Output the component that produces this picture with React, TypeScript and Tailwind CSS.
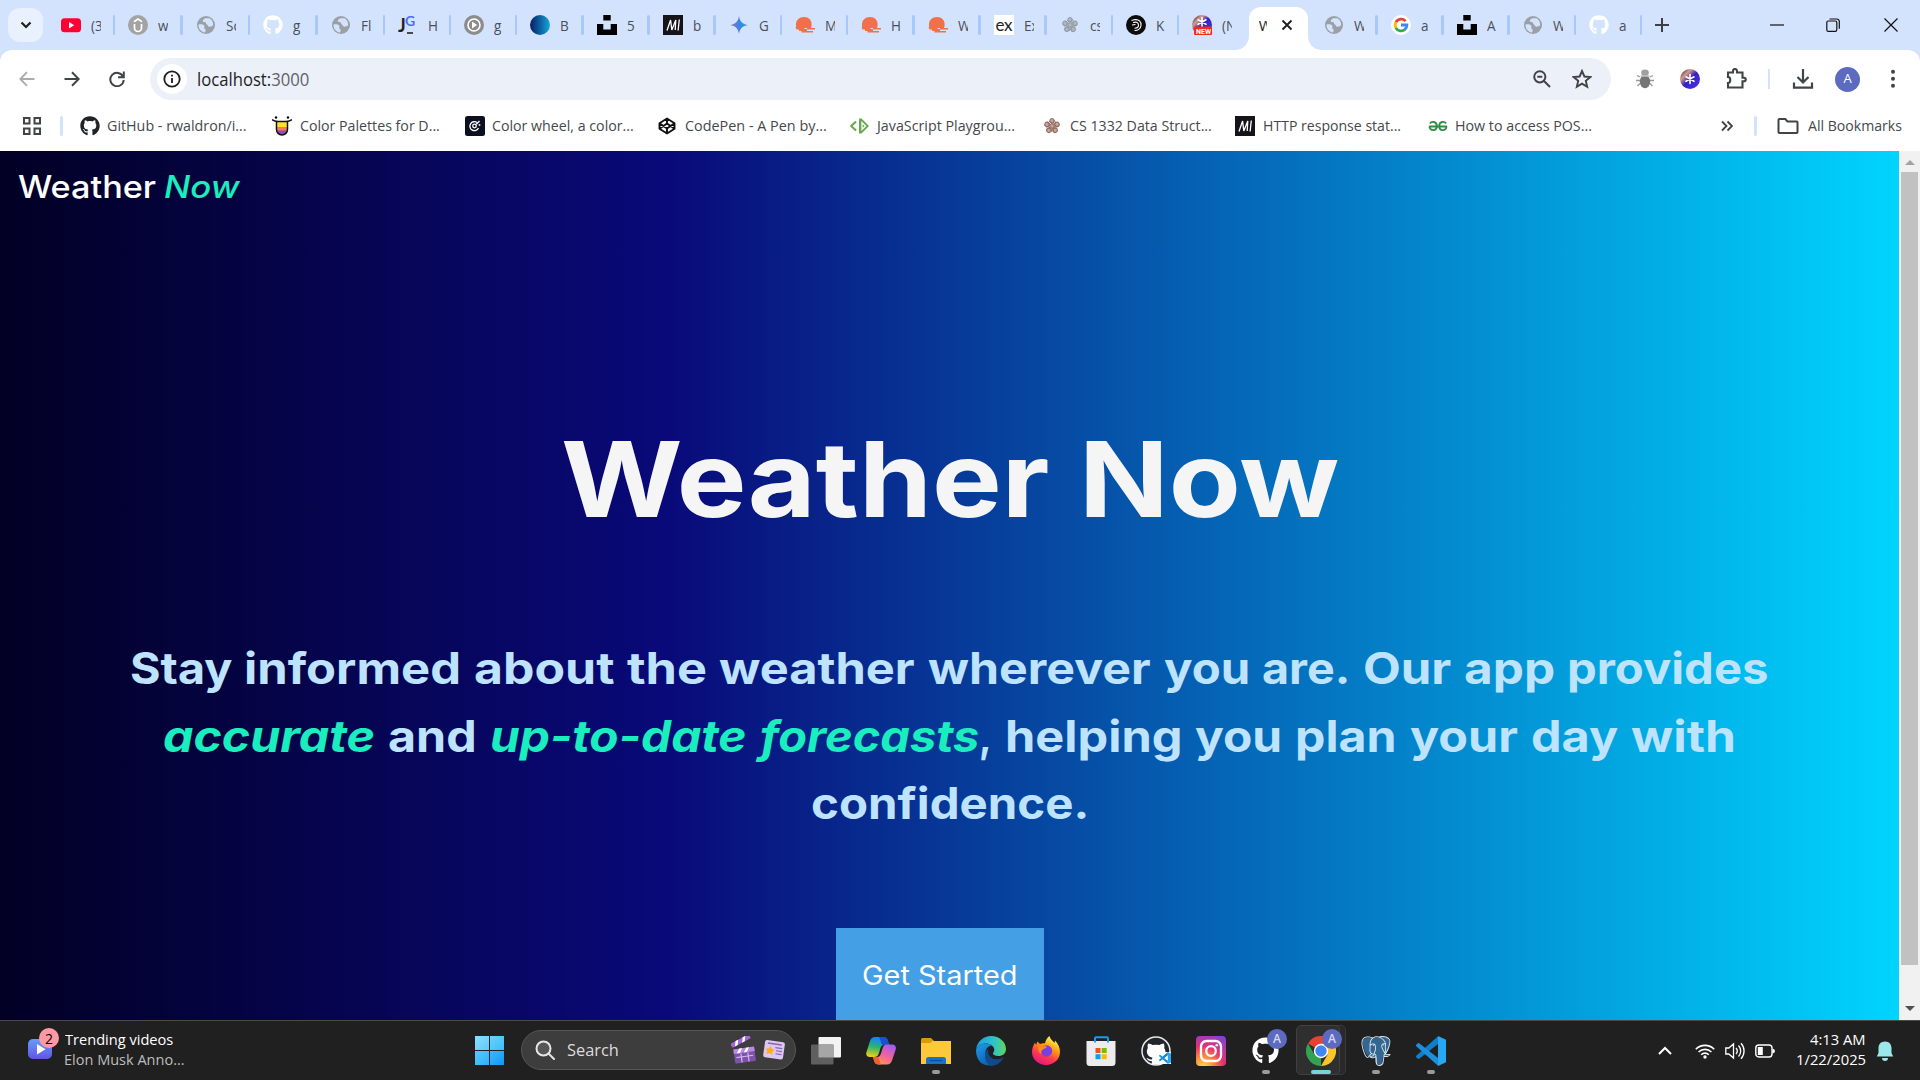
import { useLayoutEffect, useRef, useState, type ReactNode } from "react";
import { FaGithub } from "react-icons/fa";
import { SiPostgresql } from "react-icons/si";

/* Text stretched horizontally to an exact width. */
function Fit({ w, className = "", children }: { w: number; className?: string; children: ReactNode }) {
  const ref = useRef<HTMLSpanElement>(null);
  const [scale, setScale] = useState(1);
  useLayoutEffect(() => {
    if (ref.current) setScale(w / ref.current.offsetWidth);
  }, [w]);
  return (
    <span className={`block shrink-0 text-left whitespace-nowrap ${className}`} style={{ width: w }}>
      <span ref={ref} className="inline-block origin-left" style={{ transform: `scaleX(${scale})` }}>
        {children}
      </span>
    </span>
  );
}

/* ---------- favicons ---------- */
const Globe = () => (
  <svg viewBox="0 0 20 20" className="size-5">
    <circle cx="10" cy="10" r="9" fill="#9aa0a6" />
    <path d="M2.500 9.500c2-.3 4.800-.3 5.800 1.200.6 1-.3 1.500 0 2.500.2.800 1.600 1 1.500 2.300-.1.800-.7 1.400-1 2C5 17 2.300 13.500 2.500 9.500Z" fill="#d3e3fd" />
    <path d="M9 3.200c-1 1-2.200 1.500-2.300 2.700 0 .9 1.300 1 2.300 1.100 1 .2.700 1.800 1.800 2.400 1.200.6 1.200 2 2.400 2.300 1.500.3 2.500-.7 3.800-1.200.6-3-1-6-3.700-7.200Z" fill="#d3e3fd" />
  </svg>
);
const YouTube = () => (
  <svg viewBox="0 0 20 20" className="size-5">
    <rect y="3.200" width="20" height="14" rx="3.500" fill="#ff0033" />
    <path d="M8 7v6.400l5.200-3.200Z" fill="#fff" />
  </svg>
);
const UpArrow = () => (
  <svg viewBox="0 0 20 20" className="size-5" fill="none">
    <circle cx="10" cy="10" r="10" fill="#a3a3a3" />
    <path d="M6.500 9v4a3.500 3.500 0 0 0 7 0V9M6 6.800 10 4l4 2.800" stroke="#fff" strokeWidth="1.700" />
  </svg>
);
const JG = () => (
  <svg viewBox="0 0 20 20" className="size-5">
    <text x="0" y="17" fontSize="18" fontWeight="700" fontFamily="Lato, sans-serif" fill="#222" textLength="7">J</text>
    <text x="7" y="11" fontSize="14" fontWeight="700" fontFamily="Lato, sans-serif" fill="#4f6df5">G</text>
    <path d="M9 18h6" stroke="#222" strokeWidth="1.600" />
  </svg>
);
const PlayRing = () => (
  <svg viewBox="0 0 20 20" className="size-5">
    <circle cx="10" cy="10" r="10" fill="#8c8c8c" />
    <circle cx="10" cy="10" r="6" fill="none" stroke="#fff" strokeWidth="1.600" />
    <path d="M8 6.500v7l5.200-3.500Z" fill="#fff" />
  </svg>
);
const BlueBall = () => <span className="block size-5 rounded-full bg-linear-to-r from-[#0b1c66] to-[#18a8dc]" />;
const Unsplash = () => (
  <svg viewBox="0 0 20 20" className="size-5">
    <path d="M6.300 0h7.400v5.500H6.300ZM0 9h6.300v5.600h7.400V9H20v11H0Z" />
  </svg>
);
const Mdn = () => (
  <svg viewBox="0 0 20 20" className="size-5" fill="none">
    <path d="M0 0h20v20H0Z" fill="#15141a" />
    <path d="M4 15.500 7.600 5l1.200 10L12.800 5l-.6 10M16.300 4.500l-1.200 11" stroke="#fff" strokeWidth="1.300" />
  </svg>
);
const Gemini = () => (
  <svg viewBox="0 0 20 20" className="size-5">
    <defs>
      <linearGradient id="gem"><stop offset="0.1" stopColor="#8a73bd" /><stop offset="0.5" stopColor="#3d84e6" /><stop offset="1" stopColor="#1ba1e3" /></linearGradient>
    </defs>
    <path d="M10 1c.8 5.500 3.500 8.300 9 9-5.500.8-8.200 3.500-9 9-.8-5.500-3.500-8.200-9-9 5.500-.7 8.200-3.500 9-9Z" fill="url(#gem)" />
  </svg>
);
const Jelly = () => (
  <svg viewBox="0 0 20 20" className="size-5" fill="#f0704a">
    <path d="M1.500 13C-.5 7 3 2 9 2s9 5 7 11Z" />
    <path d="M.5 12h9v2.500h-8ZM12 13h8v1.600h-8ZM4 14h8v3.500H6.500V16H4Z" /><path d="M12 16h6v1.500h-6Z" />
  </svg>
);
const Ex = () => (
  <span className="flex size-5 items-center justify-center bg-white font-['Lato',sans-serif] text-[17px] leading-5 tracking-[-0.5px] text-[#222]">ex</span>
);
const Flower = ({ c = "#929aa5", d = "#b2b7be" }: { c?: string; d?: string }) => (
  <svg viewBox="0 0 20 20" className="size-5" fill="none" stroke={c} strokeWidth="1">
    {[0, 72, 144, 216, 288].map((a) => (
      <g key={a} transform={`rotate(${a} 10 10)`}>
        <circle cx="10" cy="4.700" r="2.200" fill={d} />
        <path d="m10 10 2.500-6M10 8 7 5" />
      </g>
    ))}
    <circle cx="10" cy="10" r="2.200" fill={d} />
  </svg>
);
const DarkSwirl = () => (
  <svg viewBox="0 0 20 20" className="size-5" fill="none" stroke="#fff" strokeWidth="1.100">
    <circle cx="10" cy="10" r="10" fill="#0c0c0c" stroke="none" />
    <path d="M5.500 5.500 8 4.800c5-1 7.500 2.200 7 5.700-.5 3.500-3 5-6.500 5M7 7.500c3.500-1 5.500 0 5.500 2.700 0 2-1.500 3-4 3M6 10l3.500-.5" />
  </svg>
);
const Asterisk = ({ badge = false }: { badge?: boolean }) => (
  <svg viewBox="0 0 20 20" className="size-5">
    <defs>
      <linearGradient id="ast" x1="0" y1="0" x2="1" y2="1"><stop offset="0" stopColor="#15102e" /><stop offset="0.28" stopColor="#d59c86" /><stop offset="0.5" stopColor="#3323c0" /><stop offset="1" stopColor="#4a34f5" /></linearGradient>
    </defs>
    <circle cx="10" cy="10" r="10" fill="url(#ast)" />
    <g transform={badge ? "translate(0 -3)" : ""} stroke="#fff" strokeWidth="1.600" strokeLinecap="round">
      <path d="M10 5.500v9M6 7.800l8 4.500M14 7.800l-8 4.500" />
    </g>
    {badge && <rect x="2" y="11.500" width="18" height="8.500" rx="1" fill="#f02d14" />}
    {badge && <text x="4" y="18.500" fontSize="7" fontWeight="700" fontFamily="Roboto, sans-serif" fill="#fff">NEW</text>}
  </svg>
);
const Google = () => (
  <svg viewBox="0 0 20 20" className="size-5" fill="none" strokeWidth="2.800">
    <circle cx="10" cy="10" r="10" fill="#fff" />
    <path d="M14.500 6.100A6 6 0 0 0 4.900 7.200" stroke="#ea4335" />
    <path d="M4.900 7.100a6 6 0 0 0 0 5.800" stroke="#fbbc05" />
    <path d="M4.800 12.800a6 6 0 0 0 9.200 1.700" stroke="#34a853" />
    <path d="M13.700 14.700c1.600-1.200 2.200-2.700 2.200-4.700H10" stroke="#4285f4" />
  </svg>
);
const GhWhite = () => <FaGithub className="size-5 text-white" />;

type Tab = { icon: ReactNode; t: string };
const tabsWide: Tab[] = [
  { icon: <YouTube />, t: "(3" },
  { icon: <UpArrow />, t: "w" },
  { icon: <Globe />, t: "So" },
  { icon: <GhWhite />, t: "g" },
  { icon: <Globe />, t: "Fl" },
];
const tabsMid: Tab[] = [
  { icon: <JG />, t: "H" },
  { icon: <PlayRing />, t: "g" },
  { icon: <BlueBall />, t: "B" },
  { icon: <Unsplash />, t: "5" },
  { icon: <Mdn />, t: "b" },
  { icon: <Gemini />, t: "G" },
  { icon: <Jelly />, t: "M" },
  { icon: <Jelly />, t: "H" },
  { icon: <Jelly />, t: "W" },
  { icon: <Ex />, t: "Ex" },
  { icon: <Flower />, t: "cs" },
  { icon: <DarkSwirl />, t: "K" },
];
const tabsRight: Tab[] = [
  { icon: <Globe />, t: "W" },
  { icon: <Google />, t: "a" },
  { icon: <Unsplash />, t: "A" },
  { icon: <Globe />, t: "W" },
  { icon: <GhWhite />, t: "a" },
];

const TabItem = ({ icon, t, size = "w-[66.2px]", sep = true }: Tab & { size?: string; sep?: boolean }) => (
  <div className={`flex h-[50px] shrink-0 items-center pl-[13px] ${size}`}>
    {icon}
    <span className="ml-[10px] w-[10px] overflow-hidden text-[15px] leading-5 whitespace-nowrap text-[#4a4f57]">
      <span className="inline-block origin-left scale-x-90">{t}</span>
    </span>
    {sep && <span className="ml-auto h-5 w-[2.5px] rounded-full bg-[#a8c7fa]" />}
  </div>
);

const TabStrip = () => (
  <div className="flex h-[50px] shrink-0 bg-[#d3e3fd]">
    <div className="mt-2 ml-2 flex h-[34px] w-[35px] shrink-0 items-center justify-center rounded-xl bg-[#e9f1fe]">
      <svg viewBox="0 0 12 12" className="size-3" fill="none" stroke="#1f1f1f" strokeWidth="2.200"><path d="m1.500 3.500 4.500 4.500 4.500-4.500" /></svg>
    </div>
    <div className="ml-[4.5px] flex shrink-0">
      {tabsWide.map((t, i) => <TabItem key={i} {...t} size="w-[67.5px]" />)}
      {tabsMid.map((t, i) => <TabItem key={i} {...t} />)}
      <TabItem icon={<Asterisk badge />} t="(N" size="w-[69.6px]" sep={false} />
    </div>
    <div className="relative mt-[7px] flex h-[43px] w-[59px] shrink-0 items-center rounded-t-xl bg-white pb-[7px] pl-2.5">
      <svg viewBox="0 0 14 14" className="absolute bottom-0 -left-[14px] size-[14px]"><path d="M14 0v14H0C8 14 14 8 14 0Z" fill="#fff" /></svg>
      <svg viewBox="0 0 14 14" className="absolute -right-[14px] bottom-0 size-[14px]"><path d="M0 0v14h14C6 14 0 8 0 0Z" fill="#fff" /></svg>
      <span className="w-2 overflow-hidden text-[15px] whitespace-nowrap text-[#1f1f1f]">W</span>
      <svg viewBox="0 0 12 12" className="ml-[14px] size-3" stroke="#1f1f1f" strokeWidth="1.900"><path d="m1.500 1.500 9 9m0-9-9 9" /></svg>
    </div>
    <div className="ml-[3.5px] flex shrink-0">
      {tabsRight.map((t, i) => <TabItem key={i} {...t} />)}
    </div>
    <svg viewBox="0 0 14 14" className="mt-[18px] ml-[13px] size-[14px] shrink-0" stroke="#3c4043" strokeWidth="2"><path d="M7 0v14M0 7h14" /></svg>
    <div className="ml-auto flex items-center pr-[22px] pb-px">
      <svg viewBox="0 0 14 14" className="mr-[42px] size-[14px]" stroke="#111" strokeWidth="1.200"><path d="M0 7h14" /></svg>
      <svg viewBox="0 0 14 14" className="mr-[44px] size-[14px]" fill="none" stroke="#111" strokeWidth="1.200"><rect x=".8" y="3" width="10" height="10.400" rx="1.600" /><path d="M3.500 1h7.200a2.500 2.500 0 0 1 2.600 2.500v7.200" /></svg>
      <svg viewBox="0 0 14 14" className="size-[14px]" stroke="#111" strokeWidth="1.200"><path d="m.5.500 13 13m0-13-13 13" /></svg>
    </div>
  </div>
);

const Toolbar = () => (
  <div className="bg-[#d3e3fd]">
    <div className="flex h-[58px] items-center rounded-t-xl bg-white">
      <svg viewBox="0 0 16 16" className="ml-[19px] size-4 shrink-0" fill="none" stroke="#a9abad" strokeWidth="1.800"><path d="M15.500 8H1.500M8 1.200 1.300 8 8 14.800" /></svg>
      <svg viewBox="0 0 16 16" className="ml-[29px] size-4 shrink-0" fill="none" stroke="#414346" strokeWidth="2"><path d="M.5 8h14M8 1.200 14.700 8 8 14.800" /></svg>
      <svg viewBox="0 0 16 16" className="ml-[29px] size-4 shrink-0" fill="none" stroke="#414346" strokeWidth="2"><path d="M14 5.500A6.700 6.700 0 1 0 14.700 9M14.800.5v5.700H9" /></svg>
      <div className="ml-[25px] flex h-[42px] w-[1461px] shrink-0 items-center rounded-full bg-[#ecf0f9] pl-[7px]">
        <span className="flex size-[30px] items-center justify-center rounded-full bg-white">
          <svg viewBox="0 0 18 18" className="size-[18px]" fill="none" stroke="#1f1f1f" strokeWidth="1.800"><circle cx="9" cy="9" r="7.700" /><path d="M9 8v5M9 4.700v1.800" /></svg>
        </span>
        <Fit w={112} className="ml-2.5 text-[18px] leading-6 text-[#1f1f1f]">localhost:<span className="text-[#5f6368]">3000</span></Fit>
        <svg viewBox="0 0 18 18" className="ml-auto size-[18px]" fill="none" stroke="#414346" strokeWidth="2"><circle cx="6.800" cy="6.800" r="5.600" /><path d="m11 11 6 6M4.300 6.800h5" /></svg>
        <svg viewBox="0 0 20 20" className="mr-[19px] ml-[21px] size-5" fill="none" stroke="#414346" strokeWidth="1.900"><path d="m10 2 2.400 5.500 6 .5-4.600 3.900 1.400 5.900L10 14.700l-5.200 3.100 1.400-5.900L1.600 8l6-.5Z" /></svg>
      </div>
      <svg viewBox="0 0 20 20" className="ml-6 size-5 shrink-0">
        <path d="M2 6.500 5 8m13-1.500L15 8M1 11.500h18M2.500 17 5 14.500m12.500 2.500L15 14.500" stroke="#999" strokeWidth="1.300" />
        <ellipse cx="10" cy="12.700" rx="5.200" ry="6.500" fill="#757575" /><ellipse cx="10" cy="3.700" rx="3.800" ry="3.200" fill="#a0a0a0" /><path d="M5.500 7h9" stroke="#c2c2c2" strokeWidth="1.500" />
      </svg>
      <span className="ml-[25px] shrink-0"><Asterisk /></span>
      <svg viewBox="0 0 22 22" className="ml-[25px] size-[22px] shrink-0" fill="none" stroke="#414346" strokeWidth="2.100"><path d="M3 4.500h5V3a2 2 0 0 1 4 0v1.500h5.500v5.300H19a1.500 1.500 0 0 1 0 3.500h-1.500v6.200H3V15c3 0 3-6 0-6Z" /></svg>
      <span className="ml-[21px] h-5 w-0.5 shrink-0 bg-[#d3e3fd]" />
      <svg viewBox="0 0 22 22" className="ml-[22px] size-[22px] shrink-0" fill="none" stroke="#414346" strokeWidth="2.200"><path d="M11 1v13M5.500 9l5.500 5.500L16.500 9M2 14.500v5.200h18v-5.200" /></svg>
      <span className="ml-[21px] flex size-[25px] shrink-0 items-center justify-center rounded-full bg-[#5c6bc0] text-[13px] text-white">A</span>
      <svg viewBox="0 0 6 20" className="ml-[30px] h-5 w-1.5 shrink-0" fill="#414346"><circle cx="3" cy="2.700" r="2" /><circle cx="3" cy="9.700" r="2" /><circle cx="3" cy="16.700" r="2" /></svg>
    </div>
  </div>
);

const bookmarks: { icon: ReactNode; t: string; w: number }[] = [
  { icon: <FaGithub className="size-5 text-[#1f2328]" />, t: "GitHub - rwaldron/i...", w: 140 },
  {
    icon: (
      <svg viewBox="0 0 20 20" className="size-5">
        <path d="M4.500 5h11v8.500a5.500 5.500 0 0 1-11 0Z" fill="#ffe02e" /><path d="M4.500 11h11v4h-11Z" fill="#f77b5a" /><path d="M5 14.500h10c0 3-2 4.500-5 4.500s-5-2-5-4.500" fill="#8b4fb5" />
        <path d="M0 3.500c2 1.800 4 2 6 2h8c2 0 4-.2 6-2M4.500 5.500v8a5.500 5.500 0 0 0 11 0v-8" fill="none" stroke="#111" strokeWidth="1.500" /><circle cx="4" cy="1.500" r="1.200" /><circle cx="16" cy="1.500" r="1.200" />
      </svg>
    ),
    t: "Color Palettes for D...", w: 140,
  },
  {
    icon: (
      <svg viewBox="0 0 20 20" className="size-5" fill="none" stroke="#fff" strokeWidth="1.300">
        <rect width="20" height="20" rx="2.500" fill="#0b1020" stroke="none" /><path d="M12 6.500A4.500 4.500 0 1 0 13.500 12" /><circle cx="9.500" cy="10" r="1.800" /><path d="M11.300 8.300 14.500 5" /><circle cx="14.500" cy="9" r=".3" />
      </svg>
    ),
    t: "Color wheel, a color...", w: 142,
  },
  {
    icon: (
      <svg viewBox="0 0 20 20" className="size-5" fill="none" stroke="#111" strokeWidth="1.900" strokeLinejoin="round">
        <path d="m10 2.500 7.500 4.700v5.600L10 17.500l-7.500-4.700V7.200ZM10 2.500v5m0 5v5M2.500 7.200 10 12.500l7.500-5.300M2.500 12.800 10 7.500l7.500 5.300" />
      </svg>
    ),
    t: "CodePen - A Pen by...", w: 142,
  },
  {
    icon: (
      <svg viewBox="0 0 20 20" className="size-5" fill="none" stroke="#6aa84f" strokeWidth="2">
        <path d="M6 5.500 1.300 10 6 14.500" /><path d="M9 2.500v15h2.500L19 10l-7.500-7.500Z" fill="#6aa84f" stroke="none" /><path d="M12 6.500v7l3.500-3.500Z" stroke="#fff" strokeWidth="1.300" />
      </svg>
    ),
    t: "JavaScript Playgrou...", w: 138,
  },
  { icon: <Flower c="#8c6b62" d="#c9a497" />, t: "CS 1332 Data Struct...", w: 142 },
  { icon: <Mdn />, t: "HTTP response stat...", w: 138 },
  {
    icon: (
      <svg viewBox="0 0 20 20" className="size-5" fill="none" stroke="#2f8d46" strokeWidth="1.900">
        <path d="M1 10.500h18M2 7.500c1.500-2.500 6.800-2.500 6.800 2.800 0 5-6.800 5-7.300.2M18 7.500c-1.500-2.500-6.800-2.500-6.800 2.800 0 5 6.800 5 7.300.2" />
      </svg>
    ),
    t: "How to access POS...", w: 137,
  },
];

const BookmarkBar = () => (
  <div className="flex h-[43px] items-center bg-white pb-[7px] text-[15px] leading-5 text-[#45484c]">
    <svg viewBox="0 0 18 18" className="ml-[23px] size-[18px] shrink-0" fill="none" stroke="#414346" strokeWidth="2"><path d="M1 1h5.500v5.500H1ZM11.500 1H17v5.500h-5.500ZM1 11.500h5.500V17H1ZM11.500 11.500H17V17h-5.500Z" /></svg>
    <span className="ml-[19px] h-5 w-[2.5px] shrink-0 rounded-full bg-[#d3e3fd]" />
    <div className="ml-[17px] flex">
      {bookmarks.map((b) => (
        <div key={b.t} className="flex w-[192.6px] shrink-0 items-center gap-[7.5px]">
          {b.icon}
          <Fit w={b.w} className="pb-0.5">{b.t}</Fit>
        </div>
      ))}
    </div>
    <svg viewBox="0 0 12 12" className="ml-[101px] size-3 shrink-0" fill="none" stroke="#414346" strokeWidth="1.800"><path d="m1 1.500 4.500 4.500L1 10.500M6.500 1.500 11 6l-4.500 4.500" /></svg>
    <span className="ml-[21px] h-5 w-[2.5px] shrink-0 rounded-full bg-[#d3e3fd]" />
    <svg viewBox="0 0 22 18" className="ml-5 h-[18px] w-[22px] shrink-0" fill="none" stroke="#414346" strokeWidth="2"><path d="M2.500 2h5.800l2.200 2.400h9a1 1 0 0 1 1 1V15a1 1 0 0 1-1 1h-17a1 1 0 0 1-1-1V3a1 1 0 0 1 1-1Z" /></svg>
    <Fit w={94} className="ml-[9px] pb-0.5">All Bookmarks</Fit>
  </div>
);

const Em = ({ w, children }: { w: number; children: string }) => <Fit w={w} className="text-[#1aeebf] italic">{children}</Fit>;

const WeatherPage = () => (
  <div className="flex h-[869px] shrink-0 overflow-hidden">
    <main className="flex w-[1899px] shrink-0 flex-col items-center overflow-hidden bg-[linear-gradient(90deg,rgb(2,0,36)_0%,rgb(9,9,121)_35%,rgb(0,212,255)_100%)] font-['Inter','Liberation_Sans',sans-serif]">
      <header className="flex h-[72px] items-center self-start pt-4 pl-[18px] text-[31.5px] leading-10 font-medium text-white">
        <Fit w={138}>Weather</Fit>
        <Fit w={75} className="ml-[8px] text-[#1aeebf] italic">Now</Fit>
      </header>
      <h1 className="mt-[207px] flex h-[130px] items-center text-[104.5px] leading-[130px] font-bold text-[#f5f5f5]">
        <Fit w={489}>Weather</Fit>
        <Fit w={260} className="ml-[29px]">Now</Fit>
      </h1>
      <div className="mt-[91px] flex flex-col items-center text-[43.5px] leading-[67.5px] font-bold text-[#bee3ff]">
        <div className="flex w-[1640px] justify-between">
          <Fit w={102}>Stay</Fit><Fit w={217}>informed</Fit><Fit w={140}>about</Fit><Fit w={80}>the</Fit><Fit w={196}>weather</Fit>
          <Fit w={223}>wherever</Fit><Fit w={86}>you</Fit><Fit w={88}>are.</Fit><Fit w={88}>Our</Fit><Fit w={91}>app</Fit><Fit w={202}>provides</Fit>
        </div>
        <div className="flex w-[1573px] justify-between">
          <Em w={212}>accurate</Em><Fit w={89}>and</Fit><Em w={257}>up-to-date</Em>
          <span className="flex"><Em w={219}>forecasts</Em><Fit w={13}>,</Fit></span>
          <Fit w={178}>helping</Fit><Fit w={87}>you</Fit><Fit w={102}>plan</Fit><Fit w={108}>your</Fit><Fit w={87}>day</Fit><Fit w={105}>with</Fit>
        </div>
        <Fit w={278}>confidence.</Fit>
      </div>
      <button className="mt-[90px] mr-[19px] flex h-[110px] w-[208px] shrink-0 justify-center bg-[#449fe4] pt-[27px] text-[26.5px] leading-10 font-normal text-white">
        <Fit w={156}>Get Started</Fit>
      </button>
    </main>
    <div className="flex w-[21px] flex-col items-center bg-[#f1f1f1]">
      <svg viewBox="0 0 10 5" className="mt-[9px] h-[5px] w-2.5 shrink-0" fill="#a3a3a3"><path d="M5 0l5 5H0Z" /></svg>
      <div className="mt-[7px] h-[793px] w-[17px] shrink-0 bg-[#c1c1c1]" />
      <svg viewBox="0 0 10 5" className="mt-[41px] h-[5px] w-2.5 shrink-0" fill="#505050"><path d="M0 0h10L5 5Z" /></svg>
    </div>
  </div>
);

/* ---------- taskbar ---------- */
const App55 = ({ children, run }: { children: ReactNode; run?: "idle" | "active" }) => (
  <div className="relative flex h-[59px] w-[55px] shrink-0 items-center justify-center">
    {children}
    {run === "idle" && <span className="absolute bottom-[6px] h-1 w-2 rounded-full bg-[#9a9a9a]" />}
    {run === "active" && <span className="absolute bottom-[6px] h-1 w-5 rounded-full bg-[#76d5da]" />}
  </div>
);
const ABadge = () => (
  <span className="absolute top-[8px] left-[29px] flex size-5 items-center justify-center rounded-full bg-[#5c6bc0] text-[12px] font-semibold text-[#d5d9f2]">A</span>
);
const VsCode = ({ className }: { className: string }) => (
  <svg viewBox="0 0 30 30" className={className}>
    <path d="M22 0 30 3.800v22.400L22 30Z" fill="#28a8f2" />
    <path d="M22 .2V8L3.500 22.500a1.600 1.600 0 0 1-2 0L.5 21.500a1.400 1.400 0 0 1 0-2Z" fill="#0f7fcc" />
    <path d="M22 29.800V22L3.500 7.500a1.600 1.600 0 0 0-2 0L.5 8.500a1.400 1.400 0 0 0 0 2Z" fill="#1c8fdc" />
  </svg>
);

const Taskbar = () => (
  <footer className="flex h-[60px] shrink-0 border-t border-[#4a4848] bg-[#212020] font-['Open_Sans','Noto_Sans',sans-serif]">
    <div className="flex w-[460px] items-center pb-[3px] pl-7">
      <div className="relative h-5 w-6 rounded-[5px] bg-linear-to-b from-[#669bf8] to-[#6253e8]">
        <svg viewBox="0 0 24 20" className="h-5 w-6"><path d="M9 5v10.500l8.500-5.200Z" fill="#fff" /></svg>
        <span className="absolute -top-[11px] left-[11px] flex size-5 items-center justify-center rounded-full bg-[#ff99a4] text-[14px] text-black">2</span>
      </div>
      <div className="ml-[12px] text-[15px] leading-5 text-white">
        <Fit w={108} className="ml-px">Trending videos</Fit>
        <Fit w={121} className="text-[#bdbdbd]">Elon Musk Anno...</Fit>
      </div>
    </div>
    <div className="flex w-[61px] items-center pl-[15px]">
      <div className="grid size-[29px] grid-cols-2 gap-px">
        <span className="bg-linear-to-br from-[#8ae0fd] to-[#5cc9fb]" /><span className="bg-linear-to-br from-[#6ad2fb] to-[#3dbbfa]" />
        <span className="bg-linear-to-br from-[#55cbfb] to-[#2cb0f9]" /><span className="bg-linear-to-br from-[#3cbafb] to-[#0d96f6]" />
      </div>
    </div>
    <div className="mt-[9px] flex h-10 w-[275px] shrink-0 items-center rounded-full border border-[#565656] bg-[#3d3d3d] pl-[13px]">
      <svg viewBox="0 0 20 20" className="size-5" fill="none" stroke="#e6e6e6" strokeWidth="2"><circle cx="8.500" cy="8.500" r="7" fill="#565656" /><path d="m13.500 13.500 5.500 5.500" strokeLinecap="round" /></svg>
      <Fit w={52} className="ml-3 text-[17px] leading-6 text-[#dcdcdc]">Search</Fit>
      <svg viewBox="0 0 26 28" className="ml-[112px] h-7 w-[26px]">
        <g transform="rotate(-8 13 18)"><rect x="3" y="12" width="21" height="14.500" rx="1.500" fill="#7e52a8" /><path d="M3 12h21v4.500H3Z" fill="#b98be0" /><path d="m6 16.500 3-4.500h3l-3 4.500Zm7 0 3-4.500h3l-3 4.500Z" fill="#fff" /><path d="M5 20.500h17M10 17v9m7-9v9" stroke="#d3b2f0" strokeWidth="1.200" /></g>
        <g transform="rotate(-28 2 11)"><rect x="1" y="7" width="21" height="4.500" rx="1" fill="#a867d8" /><path d="m4 11.500 3-4.500h3l-3 4.500Zm8 0L15 7h3l-3 4.500Z" fill="#fff" /></g>
      </svg>
      <svg viewBox="0 0 24 22" className="ml-[5px] h-[22px] w-6">
        <g transform="rotate(8 12 11)"><rect x="2" y="2" width="20" height="17.500" rx="2" fill="#dcc8f0" /><path d="M5 5h14" stroke="#8a63b5" strokeWidth="1.500" /><path d="M13 8.500h7M14 11.500h6M14 14.500h6" stroke="#8a63b5" strokeWidth="1.200" /><path d="m8 7.500 1.600 2.700 3 .5-2.100 2.200.4 3L8 14.700l-2.900 1.200.4-3-2-2.200 3-.5Z" fill="#ffab1a" /></g>
      </svg>
    </div>
    <div className="ml-[2px] flex">
      <App55>
        <svg viewBox="0 0 30 28" className="h-7 w-[30px]"><rect x="7.500" y="0" width="22.500" height="20.500" rx="1" fill="#f3f3f3" /><rect x="0" y="7.500" width="22.500" height="20" rx="1" fill="#5f5f5f" /><path d="M7.500 7.500h15v13h-15Z" fill="#a6a6a6" /></svg>
      </App55>
      <App55>
        <svg viewBox="0 0 30 28" className="h-7 w-[30px]">
          <defs>
            <linearGradient id="cp1" x1="0.500" y1="0" x2="0.300" y2="1"><stop offset="0.100" stopColor="#1787f0" /><stop offset="0.500" stopColor="#2bb56d" /><stop offset="1" stopColor="#f3cf16" /></linearGradient>
            <linearGradient id="cp2" x1="0.700" y1="0" x2="0.200" y2="1"><stop offset="0" stopColor="#a35bf0" /><stop offset="0.500" stopColor="#f0639e" /><stop offset="1" stopColor="#ff9a4a" /></linearGradient>
          </defs>
          <path d="M9 0h8c3 0 4 1 5 4l1 4h-5c-2 0-3 1-3.500 3L13 16c-1 3-2.500 4-5 4H4c-3 0-4.500-2-3.500-5L4 4C5 1.200 6.500 0 9 0Z" fill="url(#cp1)" />
          <path d="M13 0h4c3 0 4 1 5 4l1 4h-5c-1.500 0-2.300-.5-2.800-2L14 2Z" fill="#1b4fd0" />
          <path d="M21 27.500h-8c-3 0-4-1-5-4L7 20h4c2 0 3.200-1 4-3.500l1.500-5c.8-2.500 2-4 4.500-4h5c3 0 4.500 2 3.700 5L26 23.500c-1 2.800-2.500 4-5 4Z" fill="url(#cp2)" />
          <path d="M7 20h5l3 7.500h-2c-3 0-4-1-5-4Z" fill="#f0612e" />
        </svg>
      </App55>
      <App55 run="idle">
        <svg viewBox="0 0 30 26" className="h-[26px] w-[30px]"><path d="M0 1.500Q0 0 1.500 0H10l3.500 3.500V9H0Z" fill="#dd9a07" /><path d="M0 5h9l3-2h18v23H0Z" fill="#fdc93a" /><path d="M5 26v-4.500q0-2.500 2.500-2.500h15q2.500 0 2.500 2.500V26Z" fill="#1574c9" /><path d="M9 22.500h12" stroke="#0b4f92" strokeWidth="1.200" /></svg>
      </App55>
      <App55>
        <svg viewBox="0 0 30 30" className="size-[30px]">
          <defs>
            <linearGradient id="ed1"><stop offset="0" stopColor="#1b9de2" /><stop offset="0.600" stopColor="#2fc3c9" /><stop offset="1" stopColor="#63d45c" /></linearGradient>
            <linearGradient id="ed2" x1="0" y1="0" x2="0.600" y2="1"><stop offset="0" stopColor="#1d9de8" /><stop offset="1" stopColor="#0b5cb0" /></linearGradient>
          </defs>
          <path d="M0 14C1 5 8 0 15 0c8.500 0 15 6 15 13 0 4.500-3.500 7-7.500 7-3.500 0-5.500-1.300-5.500-2.500 0-1 1.300-1.500 1.300-3.700C18.300 10 14 7.500 10 7.500 5 7.500 1.500 10 0 14Z" fill="url(#ed1)" />
          <path d="M0 14c1.500-4 5-6.500 10-6.500 2.500 0 4.500.8 6 2-4 .2-6.500 3.500-6.500 7.500 0 7 6 12 12 10.500C15 31.500 0 31 0 14Z" fill="url(#ed2)" />
          <path d="M12.500 13c-1.500 5 2 10.300 8 10.300 3 0 5.200-.8 7.500-2.200C25 27 19.500 30 15 30 8 27 7 16 12.500 13Z" fill="#114a8b" />
        </svg>
      </App55>
      <App55>
        <svg viewBox="0 0 30 30" className="size-[30px]">
          <defs><linearGradient id="ff" x1="0.800" y1="0" x2="0.300" y2="1"><stop offset="0.100" stopColor="#fff14a" /><stop offset="0.400" stopColor="#ff980e" /><stop offset="0.700" stopColor="#ff3750" /><stop offset="1" stopColor="#e31587" /></linearGradient></defs>
          <path d="M1 16c0-4 1.500-7 3-9.500L5 9l1.500-3.500L9 8c1.500-.8 3-1 5-.8C14.500 4.500 16 2 18.500 0c.5 3 3 4.500 5 7l.5-2.500c3 3 5 7 5 11.500C29 23.500 22.500 29 15 29S1 23.500 1 16Z" fill="url(#ff)" />
          <circle cx="15.500" cy="15" r="5.700" fill="#7a3fe0" /><path d="M8 10c2 1 5 0 7.500.5 1 .5-1 2-3 2.500-2 1-3 3-2 5-3-1-4-5-2.500-8Z" fill="#ff8b1a" />
        </svg>
      </App55>
      <App55>
        <svg viewBox="0 0 30 30" className="size-[30px]"><path d="M9 6.500V2.200Q9 1.200 10 1.200h11q1 0 1 1v4.300" fill="none" stroke="#1a9be6" strokeWidth="2" /><path d="M.5 5h29v21.500a3.500 3.500 0 0 1-3.500 3.500H4a3.500 3.500 0 0 1-3.500-3.500Z" fill="#ececec" /><path d="M9.500 12h5v5h-5Z" fill="#f25022" /><path d="M15.700 12h5v5h-5Z" fill="#7fba00" /><path d="M9.500 18.200h5v5h-5Z" fill="#00a4ef" /><path d="M15.700 18.200h5v5h-5Z" fill="#ffb900" /><path d="M9 6.500V5M22 6.500V5" stroke="#1a9be6" strokeWidth="2" /></svg>
      </App55>
      <App55>
        <svg viewBox="0 0 30 30" className="size-[30px]"><circle cx="15" cy="15" r="14" fill="#20262c" stroke="#e8e8e8" strokeWidth="1.500" /><path d="M7 7.500q3 0 4.500 1.500 3.500-.7 7 0Q20 7.500 23 7.500q.8 2.500.2 4.500c3 4.500.3 9-4.200 9.500 1 1.500.8 4 .8 7h-9V25c-3 .5-4-1-5.300-3 2 0 2.500 2 5.300 1.500l.7-2c-4.500-.5-7.200-5-4.700-9.500q-.6-2 .2-4.500Z" fill="#fff" /></svg>
        <span className="absolute right-[12px] bottom-[16px] bg-white"><VsCode className="size-[12px]" /></span>
      </App55>
      <App55>
        <svg viewBox="0 0 30 30" className="size-[30px]" fill="none" stroke="#fff" strokeWidth="2.300">
          <defs><radialGradient id="ig" cx="0.250" cy="1" r="1.100"><stop offset="0" stopColor="#ffd55a" /><stop offset="0.300" stopColor="#fb8a3c" /><stop offset="0.600" stopColor="#e8306e" /><stop offset="1" stopColor="#8a3fd0" /></radialGradient></defs>
          <rect width="30" height="30" rx="4" fill="url(#ig)" stroke="none" /><rect x="5" y="5" width="20" height="20" rx="5.500" /><circle cx="15" cy="15" r="4.800" /><circle cx="20.800" cy="9.200" r="1.300" fill="#fff" stroke="none" />
        </svg>
      </App55>
      <App55 run="idle"><FaGithub className="size-[27px] text-white" /><ABadge /></App55>
      <App55 run="active">
        <span className="absolute top-1 left-[20px] h-[50px] w-[33px] rounded-[5px] border border-[#3a3838] bg-[#2a2828]" />
        <span className="absolute top-1 left-[3px] h-[50px] w-[44px] rounded-[5px] border border-[#414040] bg-[#302f2f]" />
        <svg viewBox="0 0 30 30" className="relative size-[30px]">
          <path d="M15 15 2 7.500A15 15 0 0 1 28 7.500H15Z" fill="#e94235" /><path d="M2 7.500 8.500 18.700 15 22.500 15 30A15 15 0 0 1 2 7.500Z" fill="#33a352" /><path d="M15 7.500h13A15 15 0 0 1 15 30l6.500-11.200Z" fill="#fcc32a" />
          <circle cx="15" cy="15" r="7.200" fill="#fff" /><circle cx="15" cy="15" r="5.700" fill="#4285f4" />
        </svg>
        <ABadge />
      </App55>
      <App55 run="idle">
        <span className="relative size-[30px]">
          <svg viewBox="0 0 30 30" className="absolute size-[30px]"><path d="M2 4C6 0 12 2 15 2c4-2 11-2 13 2 1 5-1 10-3 14h3c-1 2-3 3-6 3-1 3 0 8-4 8s-3-4-4-8l-5 1C4 19 1 10 2 4Z" fill="#336791" /></svg>
          <SiPostgresql className="absolute size-[30px] text-[#dbe5ee]" />
        </span>
      </App55>
      <App55 run="idle"><VsCode className="size-[30px]" /></App55>
    </div>
    <div className="ml-auto flex items-center text-white">
      <svg viewBox="0 0 14 10" className="h-2.5 w-[14px]" fill="none" stroke="#fff" strokeWidth="2"><path d="m1 8 6-6 6 6" /></svg>
      <svg viewBox="0 0 20 16" className="ml-[23px] h-4 w-5" fill="none" stroke="#fff" strokeWidth="1.600"><path d="M.8 6.200a13 13 0 0 1 18.400 0M3.600 9a9 9 0 0 1 12.800 0M6.200 11.700a5.300 5.300 0 0 1 7.600 0" /><circle cx="10" cy="14" r="1.700" fill="#fff" stroke="none" /></svg>
      <svg viewBox="0 0 20 18" className="ml-[10px] h-[18px] w-5" fill="none" stroke="#fff" strokeWidth="1.300"><path d="M.8 6h3L8.500 2v14L3.800 12h-3ZM11 6a4.500 4.500 0 0 1 0 6M13.500 3.500a8 8 0 0 1 0 11M16 1.200a11.500 11.500 0 0 1 0 15.600" /></svg>
      <svg viewBox="0 0 20 14" className="ml-[10px] h-[14px] w-5" fill="none" stroke="#fff" strokeWidth="1.400"><rect x=".8" y="1" width="16.200" height="12" rx="3" /><path d="M2.800 3h5v8h-5Z" fill="#fff" stroke="none" /><path d="M17.500 4.500q2.500.5 2.500 2.500t-2.500 2.500Z" fill="#fff" stroke="none" /></svg>
      <div className="ml-[21px] flex w-[70px] flex-col items-end pb-[3px] text-[15px] leading-5">
        <Fit w={56}>4:13 AM</Fit>
        <Fit w={70}>1/22/2025</Fit>
      </div>
      <svg viewBox="0 0 18 20" className="mr-[26px] ml-2.5 h-5 w-[18px]" fill="#9be8ec"><path d="M9 .5c4 0 6.500 2.800 6.500 6.500v5l1.700 3.500H.8L2.500 12V7C2.500 3.300 5 .5 9 .5ZM6 17h6a3 3 0 0 1-6 0Z" /></svg>
    </div>
  </footer>
);

export default function App() {
  return (
    <div className="flex h-[1080px] w-[1920px] flex-col overflow-hidden font-['Open_Sans','Noto_Sans',sans-serif]">
      <TabStrip />
      <Toolbar />
      <BookmarkBar />
      <WeatherPage />
      <Taskbar />
    </div>
  );
}
